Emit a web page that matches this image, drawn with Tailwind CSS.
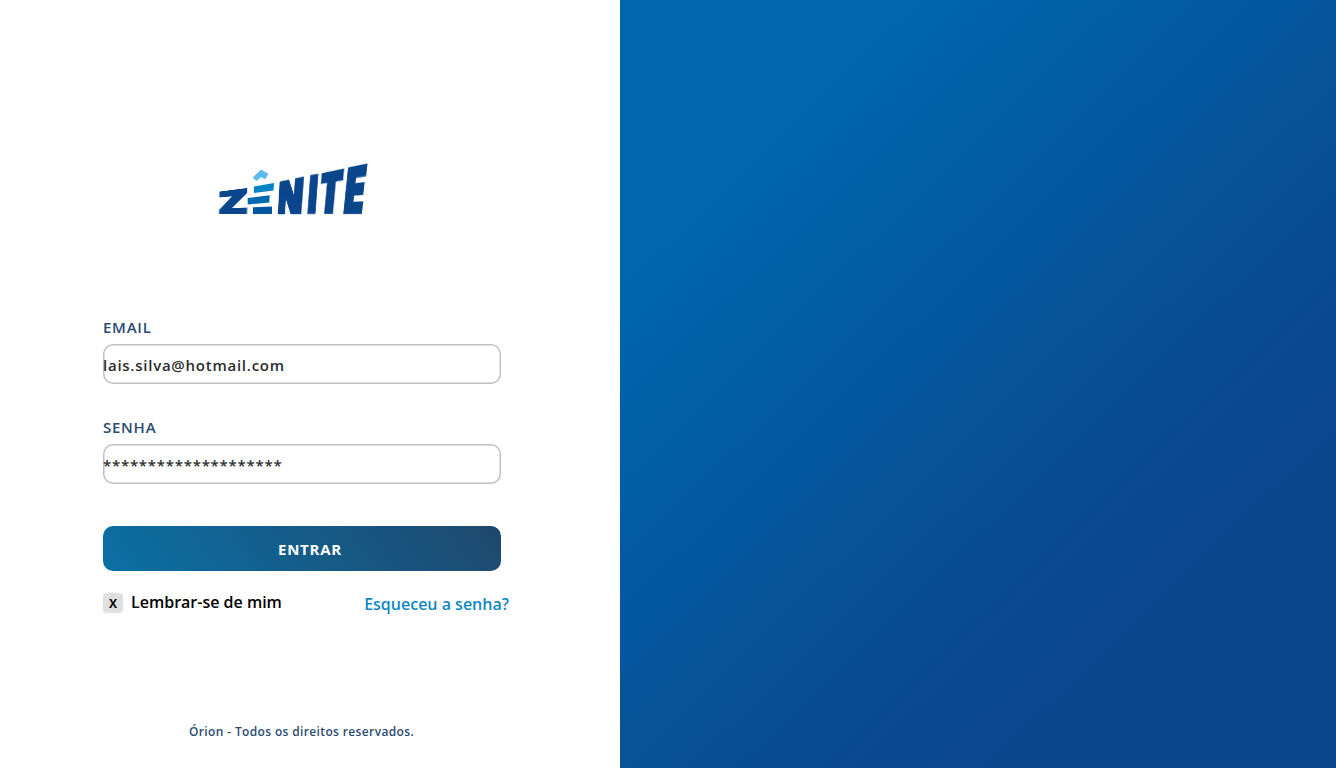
<!DOCTYPE html>
<html lang="pt-BR">
<head>
<meta charset="utf-8">
<title>Zênite - Login</title>
<script src="https://cdn.jsdelivr.net/npm/@tailwindcss/browser@4"></script>
</head>
<body class="flex h-screen overflow-hidden bg-white font-['Open_Sans','Noto_Sans',sans-serif]">
<main class="flex w-[620px] shrink-0 flex-col pl-[103px] pt-[163px]">
  <div id="logo" class="relative ml-[116px] h-[52px] w-[150px] text-[52px] font-extrabold leading-none text-[#0b468d]">
    <svg class="absolute inset-0 h-full w-full" viewBox="219 163 150 52" aria-hidden="true">
      <path fill="#5bbbf0" d="M252.8 177.5 261 169.6 268.4 173.8 265.3 179.3 261 177 256.5 181z"/>
      <path fill="#0084c5" d="M254 186.5 274 183 273.5 190.5 254 193z"/>
      <path fill="#0069ae" d="M247.7 198 269.7 195.3 269.3 202.5 247.7 204.5z"/>
      <path fill="#0457a1" d="M253 207.3 272 206.5 272 214 253 214z"/>
    </svg>
  </div>
  <form class="mt-[102px] w-[398px]">
    <label class="block h-[27px] text-[15px] font-semibold leading-[21px] tracking-[0.75px] text-[#2b4b70]">EMAIL</label>
    <div class="flex h-10 items-center rounded-[10px] shadow-[inset_0_0_0_1.5px_#c0c0c0]"><span class="pt-0.5 text-[15px] font-semibold tracking-[0.75px] text-[#2b2b2b]">lais.silva@hotmail.com</span></div>
    <label class="mt-[33px] block h-[27px] text-[15px] font-semibold leading-[21px] tracking-[0.75px] text-[#2b4b70]">SENHA</label>
    <div class="flex h-10 items-center rounded-[10px] shadow-[inset_0_0_0_1.5px_#c0c0c0]"><span class="pt-0.5 text-[15px] font-semibold tracking-[0.75px] text-[#2b2b2b]">********************</span></div>
    <button type="button" class="mt-[42px] flex h-[45px] w-full items-center rounded-[10px] bg-[linear-gradient(55deg,#0b70a5_0%,#1e486e_100%)] pl-[175px] pt-0.5 text-[15px] font-bold tracking-[0.75px] text-white">ENTRAR</button>
  </form>
  <div class="mt-[21px] flex h-6 w-[406px] items-start justify-between">
    <div class="flex items-start gap-2">
      <span class="mt-px flex h-5 w-5 items-center justify-center rounded bg-[#e0e0e0] pt-px text-[12px] font-bold leading-none">X</span>
      <span class="text-[16px] font-semibold leading-5 text-black">Lembrar-se de mim</span>
    </div>
    <a class="mt-0.5 text-[16px] font-semibold leading-5 text-[#1088c6]">Esqueceu a senha?</a>
  </div>
  <footer class="ml-[86px] mt-[107px] text-[12px] font-semibold leading-[18px] tracking-[0.36px] text-[#2b4b70]">Órion - Todos os direitos reservados.</footer>
</main>
<aside class="flex-1 bg-[linear-gradient(136deg,#0067ad_0%,#0067ad_19%,#005fa5_32%,#045aa2_39%,#0457a1_45%,#06559a_47.5%,#084c92_63%,#0b468d_77%,#0b468d_100%)]"></aside>
<script>
// Each wordmark letter: stroke width, then corners top-left, top-right, bottom-right, bottom-left.
const letters = [
  ['Z', 2, [-0.3,29, 29.2,25.2, 28.5,51.5, -0.3,51.5]],
  ['N', 4.5, [60.6,19, 85.5,13.9, 82.6,51.5, 58.8,51.5]],
  ['I', 1.5, [91.2,12.6, 100,11.2, 97,51.5, 88.3,51.5]],
  ['T', 2, [102.6,10.8, 125.6,6, 121.4,51.5, 98.8,51.5]],
  ['E', 1.8, [129,5.2, 149.3,1.1, 143.6,51.5, 124.2,51.5]]
];
const SIZE = 52;
const logo = document.getElementById('logo');
const ctx = document.createElement('canvas').getContext('2d');
ctx.font = `800 ${SIZE}px "Open Sans"`;
for (const [ch, stroke, q] of letters) {
  const m = ctx.measureText(ch);
  const base = (SIZE - m.fontBoundingBoxAscent - m.fontBoundingBoxDescent) / 2 + m.fontBoundingBoxAscent;
  const l = -m.actualBoundingBoxLeft - stroke/2, t = base - m.actualBoundingBoxAscent - stroke/2;
  const w = m.actualBoundingBoxRight + stroke/2 - l, h = base + m.actualBoundingBoxDescent + stroke/2 - t;
  const [x0,y0,x1,y1,x2,y2,x3,y3] = q;
  const dx1 = x1-x2, dx2 = x3-x2, dx3 = x0-x1+x2-x3;
  const dy1 = y1-y2, dy2 = y3-y2, dy3 = y0-y1+y2-y3;
  const det = dx1*dy2 - dx2*dy1;
  const g = (dx3*dy2 - dx2*dy3)/det, k = (dx1*dy3 - dx3*dy1)/det;
  const M = [x1-x0+g*x1, y1-y0+g*y1, 0, g, x3-x0+k*x3, y3-y0+k*y3, 0, k, 0,0,1,0, x0,y0,0,1];
  const s = document.createElement('span');
  s.textContent = ch;
  s.className = 'absolute left-0 top-0 origin-top-left';
  s.style.webkitTextStroke = `${stroke}px #0b468d`;
  s.style.transform = `matrix3d(${M.join(',')}) scale(${1/w},${1/h}) translate(${-l}px,${-t}px)`;
  logo.appendChild(s);
}
</script>
</body>
</html>
